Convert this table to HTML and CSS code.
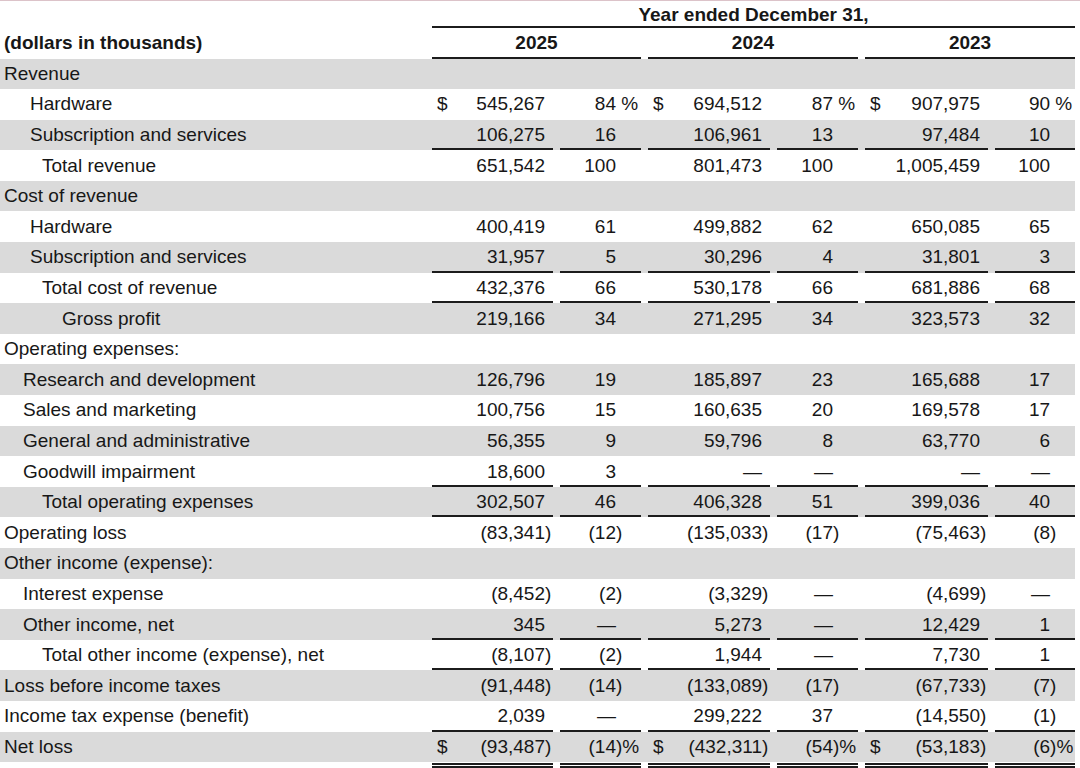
FILE: index.html
```html
<!DOCTYPE html>
<html lang="en">
<head>
    <meta charset="UTF-8">
    <meta name="viewport" content="width=device-width, initial-scale=1.0">
    <title>Consolidated Statements of Operations</title>
    <link rel="stylesheet" href="styles.css">
</head>
<body>
    <table class="income">
        <colgroup>
            <col class="c-label">
            <col class="c-amt">
            <col class="c-pct">
            <col class="c-amt2">
            <col class="c-pct">
            <col class="c-amt3">
            <col class="c-pct3">
        </colgroup>
        <thead>
            <tr class="period">
                <th></th>
                <th colspan="6" class="span">Year ended December 31,</th>
            </tr>
            <tr class="years">
                <th class="unit">(dollars in thousands)</th>
                <th colspan="2" class="span">2025</th>
                <th colspan="2" class="span">2024</th>
                <th colspan="2" class="span">2023</th>
            </tr>
        </thead>
        <tbody>
            <tr>
                <td class="l0">Revenue</td>
                <td></td><td></td><td></td><td></td><td></td><td></td>
            </tr>
            <tr>
                <td class="l1">Hardware</td>
                <td class="amt"><span class="cur">$</span>545,267</td>
                <td class="pct">84<span class="hang"> %</span></td>
                <td class="amt"><span class="cur">$</span>694,512</td>
                <td class="pct">87<span class="hang"> %</span></td>
                <td class="amt"><span class="cur">$</span>907,975</td>
                <td class="pct">90<span class="hang"> %</span></td>
            </tr>
            <tr class="rule">
                <td class="l1">Subscription and services</td>
                <td class="amt">106,275</td>
                <td class="pct">16</td>
                <td class="amt">106,961</td>
                <td class="pct">13</td>
                <td class="amt">97,484</td>
                <td class="pct">10</td>
            </tr>
            <tr>
                <td class="l2">Total revenue</td>
                <td class="amt">651,542</td>
                <td class="pct">100</td>
                <td class="amt">801,473</td>
                <td class="pct">100</td>
                <td class="amt">1,005,459</td>
                <td class="pct">100</td>
            </tr>
            <tr>
                <td class="l0">Cost of revenue</td>
                <td></td><td></td><td></td><td></td><td></td><td></td>
            </tr>
            <tr>
                <td class="l1">Hardware</td>
                <td class="amt">400,419</td>
                <td class="pct">61</td>
                <td class="amt">499,882</td>
                <td class="pct">62</td>
                <td class="amt">650,085</td>
                <td class="pct">65</td>
            </tr>
            <tr class="rule">
                <td class="l1">Subscription and services</td>
                <td class="amt">31,957</td>
                <td class="pct">5</td>
                <td class="amt">30,296</td>
                <td class="pct">4</td>
                <td class="amt">31,801</td>
                <td class="pct">3</td>
            </tr>
            <tr class="rule">
                <td class="l2">Total cost of revenue</td>
                <td class="amt">432,376</td>
                <td class="pct">66</td>
                <td class="amt">530,178</td>
                <td class="pct">66</td>
                <td class="amt">681,886</td>
                <td class="pct">68</td>
            </tr>
            <tr>
                <td class="l3">Gross profit</td>
                <td class="amt">219,166</td>
                <td class="pct">34</td>
                <td class="amt">271,295</td>
                <td class="pct">34</td>
                <td class="amt">323,573</td>
                <td class="pct">32</td>
            </tr>
            <tr>
                <td class="l0">Operating expenses:</td>
                <td></td><td></td><td></td><td></td><td></td><td></td>
            </tr>
            <tr>
                <td class="l1b">Research and development</td>
                <td class="amt">126,796</td>
                <td class="pct">19</td>
                <td class="amt">185,897</td>
                <td class="pct">23</td>
                <td class="amt">165,688</td>
                <td class="pct">17</td>
            </tr>
            <tr>
                <td class="l1b">Sales and marketing</td>
                <td class="amt">100,756</td>
                <td class="pct">15</td>
                <td class="amt">160,635</td>
                <td class="pct">20</td>
                <td class="amt">169,578</td>
                <td class="pct">17</td>
            </tr>
            <tr>
                <td class="l1b">General and administrative</td>
                <td class="amt">56,355</td>
                <td class="pct">9</td>
                <td class="amt">59,796</td>
                <td class="pct">8</td>
                <td class="amt">63,770</td>
                <td class="pct">6</td>
            </tr>
            <tr class="rule">
                <td class="l1b">Goodwill impairment</td>
                <td class="amt">18,600</td>
                <td class="pct">3</td>
                <td class="amt">—</td>
                <td class="pct">—</td>
                <td class="amt">—</td>
                <td class="pct">—</td>
            </tr>
            <tr class="rule">
                <td class="l2">Total operating expenses</td>
                <td class="amt">302,507</td>
                <td class="pct">46</td>
                <td class="amt">406,328</td>
                <td class="pct">51</td>
                <td class="amt">399,036</td>
                <td class="pct">40</td>
            </tr>
            <tr>
                <td class="l0">Operating loss</td>
                <td class="amt">(83,341<span class="hang">)</span></td>
                <td class="pct">(12<span class="hang">)</span></td>
                <td class="amt">(135,033<span class="hang">)</span></td>
                <td class="pct">(17<span class="hang">)</span></td>
                <td class="amt">(75,463<span class="hang">)</span></td>
                <td class="pct">(8<span class="hang">)</span></td>
            </tr>
            <tr>
                <td class="l0">Other income (expense):</td>
                <td></td><td></td><td></td><td></td><td></td><td></td>
            </tr>
            <tr>
                <td class="l1b">Interest expense</td>
                <td class="amt">(8,452<span class="hang">)</span></td>
                <td class="pct">(2<span class="hang">)</span></td>
                <td class="amt">(3,329<span class="hang">)</span></td>
                <td class="pct">—</td>
                <td class="amt">(4,699<span class="hang">)</span></td>
                <td class="pct">—</td>
            </tr>
            <tr class="rule">
                <td class="l1b">Other income, net</td>
                <td class="amt">345</td>
                <td class="pct">—</td>
                <td class="amt">5,273</td>
                <td class="pct">—</td>
                <td class="amt">12,429</td>
                <td class="pct">1</td>
            </tr>
            <tr class="rule">
                <td class="l2">Total other income (expense), net</td>
                <td class="amt">(8,107<span class="hang">)</span></td>
                <td class="pct">(2<span class="hang">)</span></td>
                <td class="amt">1,944</td>
                <td class="pct">—</td>
                <td class="amt">7,730</td>
                <td class="pct">1</td>
            </tr>
            <tr>
                <td class="l0">Loss before income taxes</td>
                <td class="amt">(91,448<span class="hang">)</span></td>
                <td class="pct">(14<span class="hang">)</span></td>
                <td class="amt">(133,089<span class="hang">)</span></td>
                <td class="pct">(17<span class="hang">)</span></td>
                <td class="amt">(67,733<span class="hang">)</span></td>
                <td class="pct">(7<span class="hang">)</span></td>
            </tr>
            <tr class="rule">
                <td class="l0">Income tax expense (benefit)</td>
                <td class="amt">2,039</td>
                <td class="pct">—</td>
                <td class="amt">299,222</td>
                <td class="pct">37</td>
                <td class="amt">(14,550<span class="hang">)</span></td>
                <td class="pct">(1<span class="hang">)</span></td>
            </tr>
            <tr>
                <td class="l0">Net loss</td>
                <td class="amt"><span class="cur">$</span>(93,487<span class="hang">)</span></td>
                <td class="pct">(14<span class="hang">)%</span></td>
                <td class="amt"><span class="cur">$</span>(432,311<span class="hang">)</span></td>
                <td class="pct">(54<span class="hang">)%</span></td>
                <td class="amt"><span class="cur">$</span>(53,183<span class="hang">)</span></td>
                <td class="pct">(6<span class="hang">)%</span></td>
            </tr>
            <tr class="double">
                <td></td><td></td><td></td><td></td><td></td><td></td><td></td>
            </tr>
        </tbody>
    </table>
</body>
</html>
```

FILE: styles.css
```css
* {
    margin: 0;
    padding: 0;
    box-sizing: border-box;
}
body {
    background: #ffffff;
    color: #171717;
    font-family: "Liberation Sans", Arial, sans-serif;
    font-size: 19px;
    border-top: 1px solid #dcc3c9;
}
.income {
    width: 1075px;
    table-layout: fixed;
    border-collapse: separate;
    border-spacing: 0;
}
.c-label { width: 425px; }
.c-amt { width: 128px; }
.c-amt2 { width: 129px; }
.c-amt3 { width: 130px; }
.c-pct { width: 88px; }
.c-pct3 { width: 87px; }

.income th,
.income td {
    padding: 0;
    white-space: nowrap;
    line-height: 1.15;
    vertical-align: middle;
}

/* header */
.income th {
    font-weight: bold;
}
.income .period {
    height: 27px;
}
.income .years {
    height: 30.5px;
}
.income th.span {
    text-align: center;
    padding-left: 7px;
    background: linear-gradient(#1c1c1c, #1c1c1c) no-repeat right bottom / calc(100% - 7px) 2px;
}
.income th.unit {
    text-align: left;
    padding-left: 4px;
}

/* body rows */
.income tbody tr {
    height: 30.6px;
}
.income tbody tr:nth-child(odd) {
    background: #dadada;
}
.l0 { padding-left: 4px !important; }
.l1 { padding-left: 30px !important; }
.l1b { padding-left: 23px !important; }
.l2 { padding-left: 42px !important; }
.l3 { padding-left: 62px !important; }

.income td.amt {
    text-align: right;
    padding: 0 8px 0 12px;
}
.income td.pct {
    text-align: right;
    padding-right: 25px;
}
.cur {
    float: left;
}
.hang {
    display: inline-block;
    width: 0;
    white-space: pre;
    text-align: left;
}

/* underlines */
.income tr.rule td + td {
    background: linear-gradient(#1c1c1c, #1c1c1c) no-repeat right bottom / calc(100% - 7px) 2px;
}
.income tr.double {
    height: 6px;
}
.income tr.double td + td {
    background:
        linear-gradient(#1c1c1c, #1c1c1c) no-repeat right 0 top 1px / calc(100% - 7px) 2px,
        linear-gradient(#1c1c1c, #1c1c1c) no-repeat right 0 top 4px / calc(100% - 7px) 2px;
}
```
